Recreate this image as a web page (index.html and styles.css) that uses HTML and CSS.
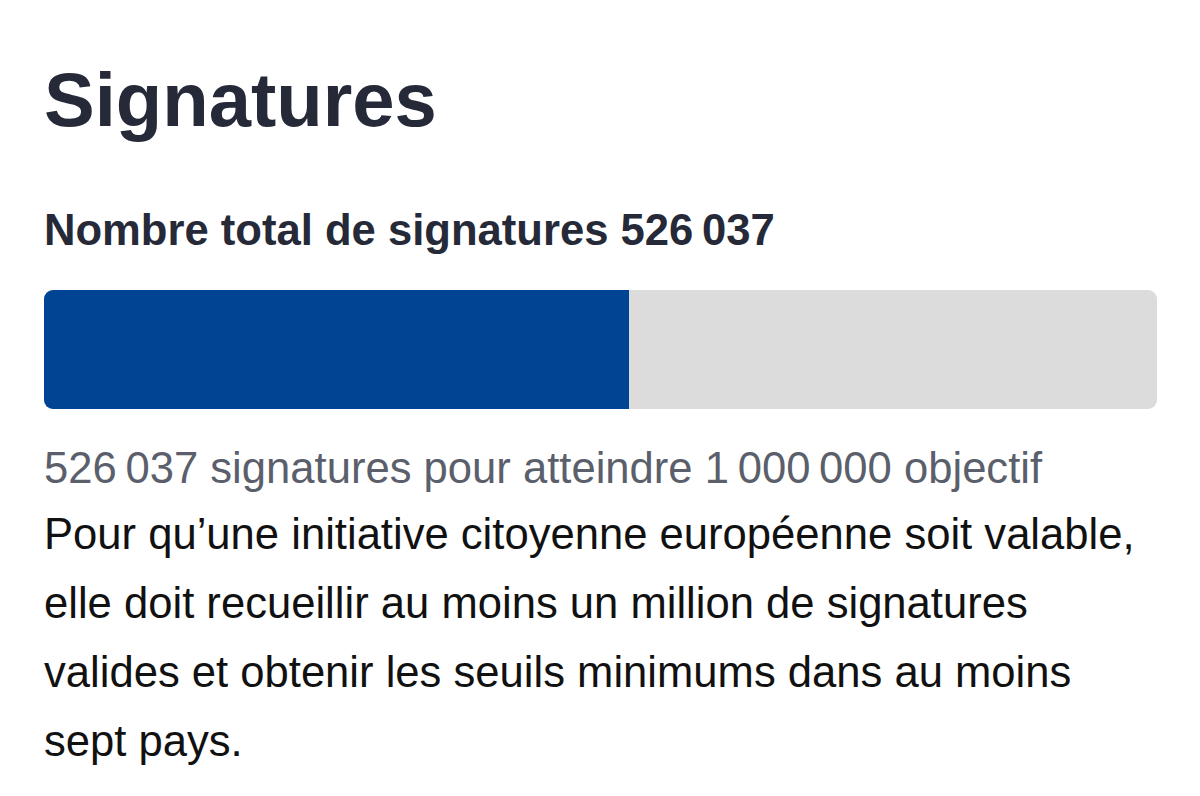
FILE: index.html
```html
<!DOCTYPE html>
<html lang="fr">
<head>
<meta charset="utf-8">
<title>Signatures</title>
<link rel="stylesheet" href="styles.css">
</head>
<body>
<section class="signatures">
  <h1 class="title">Signatures</h1>
  <h2 class="total">Nombre total de signatures 526&#8239;037</h2>
  <div class="progress" role="progressbar" aria-valuenow="526037" aria-valuemin="0" aria-valuemax="1000000">
    <div class="progress-fill" style="width: 52.6%"></div>
  </div>
  <p class="goal">526&#8239;037 signatures pour atteindre 1&#8239;000&#8239;000 objectif</p>
  <p class="info">Pour qu’une initiative citoyenne européenne soit valable, elle doit recueillir au moins un million de signatures valides et obtenir les seuils minimums dans au moins sept pays.</p>
</section>
</body>
</html>
```

FILE: styles.css
```css
html, body {
  margin: 0;
  padding: 0;
  background: #ffffff;
}

body {
  font-family: "Liberation Sans", Arial, Helvetica, sans-serif;
}

.signatures {
  display: flex;
  flex-direction: column;
  padding: 55px 43px 0 44px;
}

.title {
  margin: 0;
  font-size: 76px;
  line-height: 90px;
  font-weight: 700;
  color: #262a38;
}

.total {
  margin: 59px 0 0;
  font-size: 43.6px;
  line-height: 52px;
  font-weight: 700;
  color: #262a38;
}

.progress {
  margin-top: 34px;
  height: 119px;
  background: #dcdcdc;
  border-radius: 9px;
  overflow: hidden;
  display: flex;
}

.progress-fill {
  background: #004494;
  height: 100%;
}

.goal {
  margin: 33px 0 0;
  font-size: 43.6px;
  line-height: 52px;
  color: #5b5f6b;
}

.info {
  margin: 6px 0 0;
  font-size: 43.6px;
  line-height: 69px;
  color: #111111;
}
```
